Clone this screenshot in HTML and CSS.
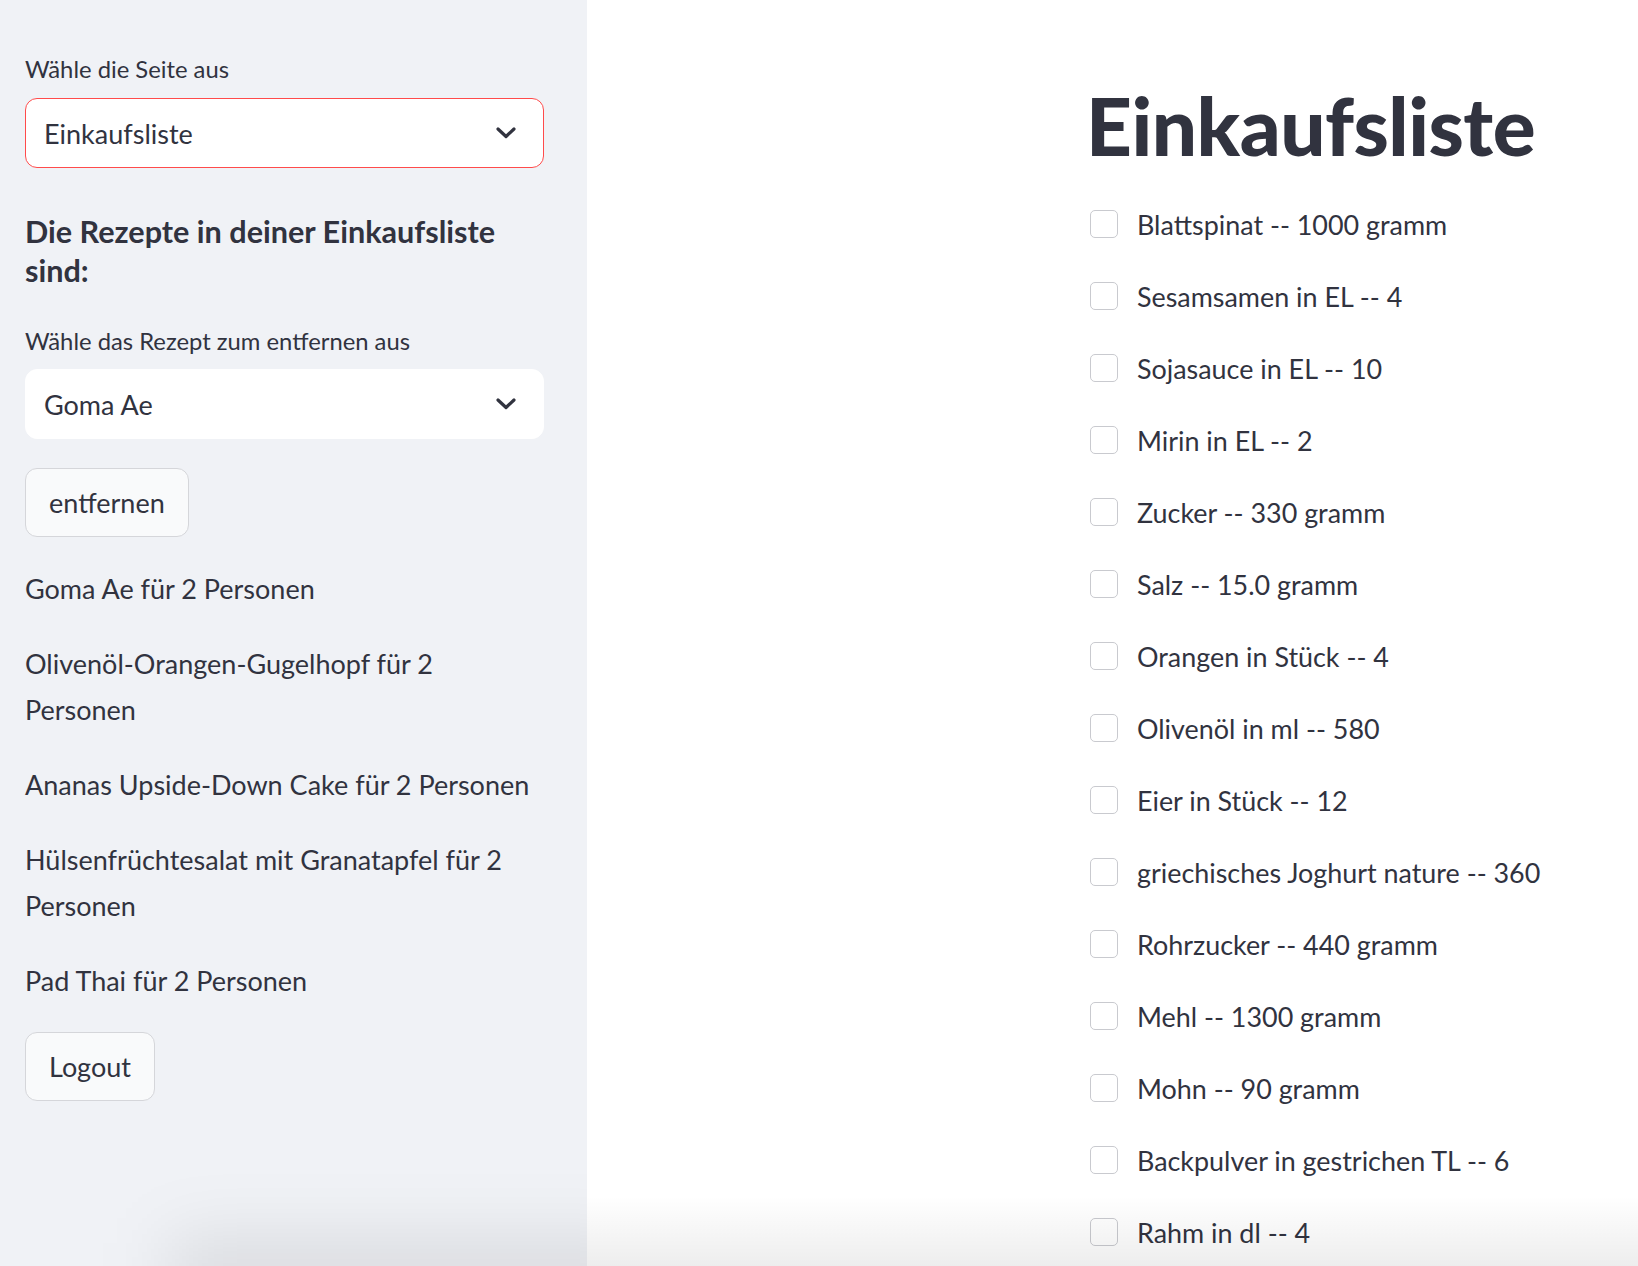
FILE: index.html
```html
<!DOCTYPE html>
<html lang="de">
<head>
<meta charset="utf-8">
<title>Einkaufsliste</title>
<link rel="stylesheet" href="styles.css">
</head>
<body>
<div class="app">
  <aside class="sidebar">
    <div class="label">Wähle die Seite aus</div>
    <div class="select select-focus">
      <span>Einkaufsliste</span>
      <svg class="chev" width="20" height="12" viewBox="0 0 20 12"><path d="M2 2 L10 9.5 L18 2" fill="none" stroke="#31333f" stroke-width="3.2" stroke-linecap="round" stroke-linejoin="round"/></svg>
    </div>
    <h3 class="side-head">Die Rezepte in deiner Einkaufsliste sind:</h3>
    <div class="label label2">Wähle das Rezept zum entfernen aus</div>
    <div class="select">
      <span>Goma Ae</span>
      <svg class="chev" width="20" height="12" viewBox="0 0 20 12"><path d="M2 2 L10 9.5 L18 2" fill="none" stroke="#31333f" stroke-width="3.2" stroke-linecap="round" stroke-linejoin="round"/></svg>
    </div>
    <button class="btn btn-remove">entfernen</button>
    <div class="recipes">
      <p>Goma Ae für 2 Personen</p>
      <p>Olivenöl-Orangen-Gugelhopf für 2 Personen</p>
      <p>Ananas Upside-Down Cake für 2 Personen</p>
      <p>Hülsenfrüchtesalat mit Granatapfel für 2 Personen</p>
      <p>Pad Thai für 2 Personen</p>
    </div>
    <button class="btn btn-logout">Logout</button>
    <div class="shade-side"></div>
  </aside>
  <main class="main">
    <h1 class="title">Einkaufsliste</h1>
    <ul class="checklist">
      <li><span class="box"></span><span>Blattspinat -- 1000 gramm</span></li>
      <li><span class="box"></span><span>Sesamsamen in EL -- 4</span></li>
      <li><span class="box"></span><span>Sojasauce in EL -- 10</span></li>
      <li><span class="box"></span><span>Mirin in EL -- 2</span></li>
      <li><span class="box"></span><span>Zucker -- 330 gramm</span></li>
      <li><span class="box"></span><span>Salz -- 15.0 gramm</span></li>
      <li><span class="box"></span><span>Orangen in Stück -- 4</span></li>
      <li><span class="box"></span><span>Olivenöl in ml -- 580</span></li>
      <li><span class="box"></span><span>Eier in Stück -- 12</span></li>
      <li><span class="box"></span><span>griechisches Joghurt nature -- 360</span></li>
      <li><span class="box"></span><span>Rohrzucker -- 440 gramm</span></li>
      <li><span class="box"></span><span>Mehl -- 1300 gramm</span></li>
      <li><span class="box"></span><span>Mohn -- 90 gramm</span></li>
      <li><span class="box"></span><span>Backpulver in gestrichen TL -- 6</span></li>
      <li><span class="box"></span><span>Rahm in dl -- 4</span></li>
    </ul>
  </main>
  <div class="shade-main"></div>
</div>
</body>
</html>
```
FILE: styles.css
```css
* { box-sizing: border-box; }
html, body {
  margin: 0;
  padding: 0;
  height: 100%;
  overflow: hidden;
}
body {
  font-family: "Lato", "Noto Sans", sans-serif;
  color: #31333f;
  background: #ffffff;
}
.app {
  position: relative;
  display: flex;
  height: 1266px;
  overflow: hidden;
}
.sidebar {
  position: relative;
  overflow: hidden;
  width: 587px;
  flex: 0 0 587px;
  background: #f0f2f6;
  padding: 49px 43px 0 25px;
  display: flex;
  flex-direction: column;
  align-items: flex-start;
}
.label {
  font-size: 23.8px;
  line-height: 40px;
  height: 40px;
  margin-bottom: 9px;
}
.label2 {
  margin-top: 31px;
  margin-bottom: 8px;
}
.select {
  width: 519px;
  height: 70px;
  background: #ffffff;
  border: 1px solid #ffffff;
  border-radius: 12px;
  display: flex;
  align-items: center;
  justify-content: space-between;
  padding: 0 27px 0 18px;
  font-size: 27px;
}
.select-focus {
  border-color: #ff4b4b;
}
.chev { display: block; }
.side-head {
  margin: 44px 0 0 0;
  width: 519px;
  font-size: 30.6px;
  font-weight: 700;
  line-height: 39px;
}
.btn {
  font-family: inherit;
  color: #31333f;
  background: #f9fafb;
  border: 1px solid #d5d6da;
  border-radius: 12px;
  height: 69px;
  padding: 0 23px;
  font-size: 27px;
  margin-top: 29px;
}
.btn-logout {
  margin-top: 28px;
}
.recipes {
  margin-top: 29px;
  display: flex;
  flex-direction: column;
  gap: 29px;
  width: 519px;
}
.recipes p {
  margin: 0;
  font-size: 27px;
  line-height: 46px;
}
.main {
  flex: 1;
  padding: 77px 0 0 501px;
}
.title {
  margin: 0 0 28px -2px;
  font-size: 80px;
  font-weight: 900;
  line-height: 96px;
  letter-spacing: -0.5px;
  white-space: nowrap;
}
.checklist {
  list-style: none;
  margin: 0;
  padding: 0;
  display: flex;
  flex-direction: column;
  gap: 26px;
}
.checklist li {
  display: flex;
  align-items: center;
  height: 46px;
  font-size: 26.9px;
  white-space: nowrap;
}
.box {
  width: 28px;
  height: 28px;
  margin: 0 19px 0 2px;
  border: 1px solid #c9cacf;
  border-radius: 5px;
  background: #ffffff;
  flex: 0 0 28px;
}
.shade-main {
  position: absolute;
  left: 587px;
  right: 0;
  bottom: 0;
  height: 70px;
  background: linear-gradient(to bottom, rgba(0,0,0,0), rgba(0,0,0,0.07));
  pointer-events: none;
}
.shade-side {
  position: absolute;
  left: 170px;
  right: -60px;
  bottom: -45px;
  height: 70px;
  background: rgba(0,0,0,0.10);
  filter: blur(35px);
  pointer-events: none;
}
```
